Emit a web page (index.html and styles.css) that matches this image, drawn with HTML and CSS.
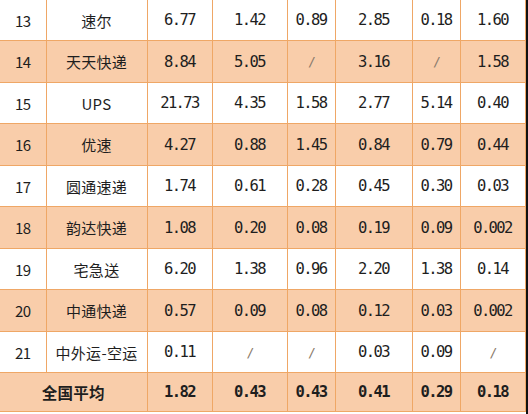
FILE: index.html
```html
<!DOCTYPE html>
<html lang="zh-CN">
<head>
<meta charset="utf-8">
<link rel="stylesheet" href="styles.css">
</head>
<body>
<div class="frame">
  <table class="rates">
    <colgroup>
      <col class="c-no"><col class="c-name"><col class="c-a"><col class="c-b"><col class="c-c"><col class="c-d"><col class="c-e"><col class="c-f">
    </colgroup>
    <tbody>
      <tr><td class="no">13</td><td class="name">速尔</td><td>6.77</td><td>1.42</td><td>0.89</td><td>2.85</td><td>0.18</td><td>1.60</td></tr>
      <tr class="alt"><td class="no">14</td><td class="name">天天快递</td><td>8.84</td><td>5.05</td><td class="slash">/</td><td>3.16</td><td class="slash">/</td><td>1.58</td></tr>
      <tr><td class="no">15</td><td class="name">UPS</td><td>21.73</td><td>4.35</td><td>1.58</td><td>2.77</td><td>5.14</td><td>0.40</td></tr>
      <tr class="alt"><td class="no">16</td><td class="name">优速</td><td>4.27</td><td>0.88</td><td>1.45</td><td>0.84</td><td>0.79</td><td>0.44</td></tr>
      <tr><td class="no">17</td><td class="name">圆通速递</td><td>1.74</td><td>0.61</td><td>0.28</td><td>0.45</td><td>0.30</td><td>0.03</td></tr>
      <tr class="alt"><td class="no">18</td><td class="name">韵达快递</td><td>1.08</td><td>0.20</td><td>0.08</td><td>0.19</td><td>0.09</td><td>0.002</td></tr>
      <tr><td class="no">19</td><td class="name">宅急送</td><td>6.20</td><td>1.38</td><td>0.96</td><td>2.20</td><td>1.38</td><td>0.14</td></tr>
      <tr class="alt"><td class="no">20</td><td class="name">中通快递</td><td>0.57</td><td>0.09</td><td>0.08</td><td>0.12</td><td>0.03</td><td>0.002</td></tr>
      <tr><td class="no">21</td><td class="name">中外运-空运</td><td>0.11</td><td class="slash">/</td><td class="slash">/</td><td>0.03</td><td>0.09</td><td class="slash">/</td></tr>
      <tr class="alt total"><td class="name" colspan="2">全国平均</td><td>1.82</td><td>0.43</td><td>0.43</td><td>0.41</td><td>0.29</td><td>0.18</td></tr>
    </tbody>
  </table>
  <div class="edge"></div>
</div>
</body>
</html>
```

FILE: styles.css
```css
html, body {
  margin: 0;
  padding: 0;
  background: #ffffff;
}

.frame {
  display: flex;
  align-items: stretch;
  width: 528px;
  height: 414px;
  overflow: hidden;
}

.rates {
  border-collapse: collapse;
  table-layout: fixed;
  width: 525px;
  height: 412px;
  align-self: flex-start;
  color: #1e1e1e;
}

.edge {
  flex: 1;
  background: #111111;
}

.c-no { width: 46px; }
.c-name { width: 101px; }
.c-a { width: 65px; }
.c-b { width: 75px; }
.c-c { width: 48px; }
.c-d { width: 77px; }
.c-e { width: 48px; }
.c-f { width: 65px; }

.rates td {
  height: 40px;
  padding: 0;
  text-align: center;
  vertical-align: middle;
  border: 1px solid #efa766;
  border-top: none;
  font-family: "DejaVu Sans Mono", monospace;
  font-size: 15.5px;
  letter-spacing: -1.6px;
  white-space: nowrap;
}

.rates td:first-child {
  border-left: none;
}

.rates td.no {
  font-family: "Noto Sans CJK SC", "Noto Sans", sans-serif;
  font-size: 15px;
  letter-spacing: -0.6px;
}

.rates td.name {
  font-family: "Noto Sans CJK SC", sans-serif;
  font-size: 15px;
  letter-spacing: 0.3px;
}

.rates td.slash {
  color: #8a7a6a;
  font-size: 13px;
}

.rates tr.alt td {
  background: #f9cdaa;
}

.rates tr.total td {
  font-weight: bold;
  height: 37px;
}

.rates tr.total td.name {
  font-size: 15.5px;
}
```
